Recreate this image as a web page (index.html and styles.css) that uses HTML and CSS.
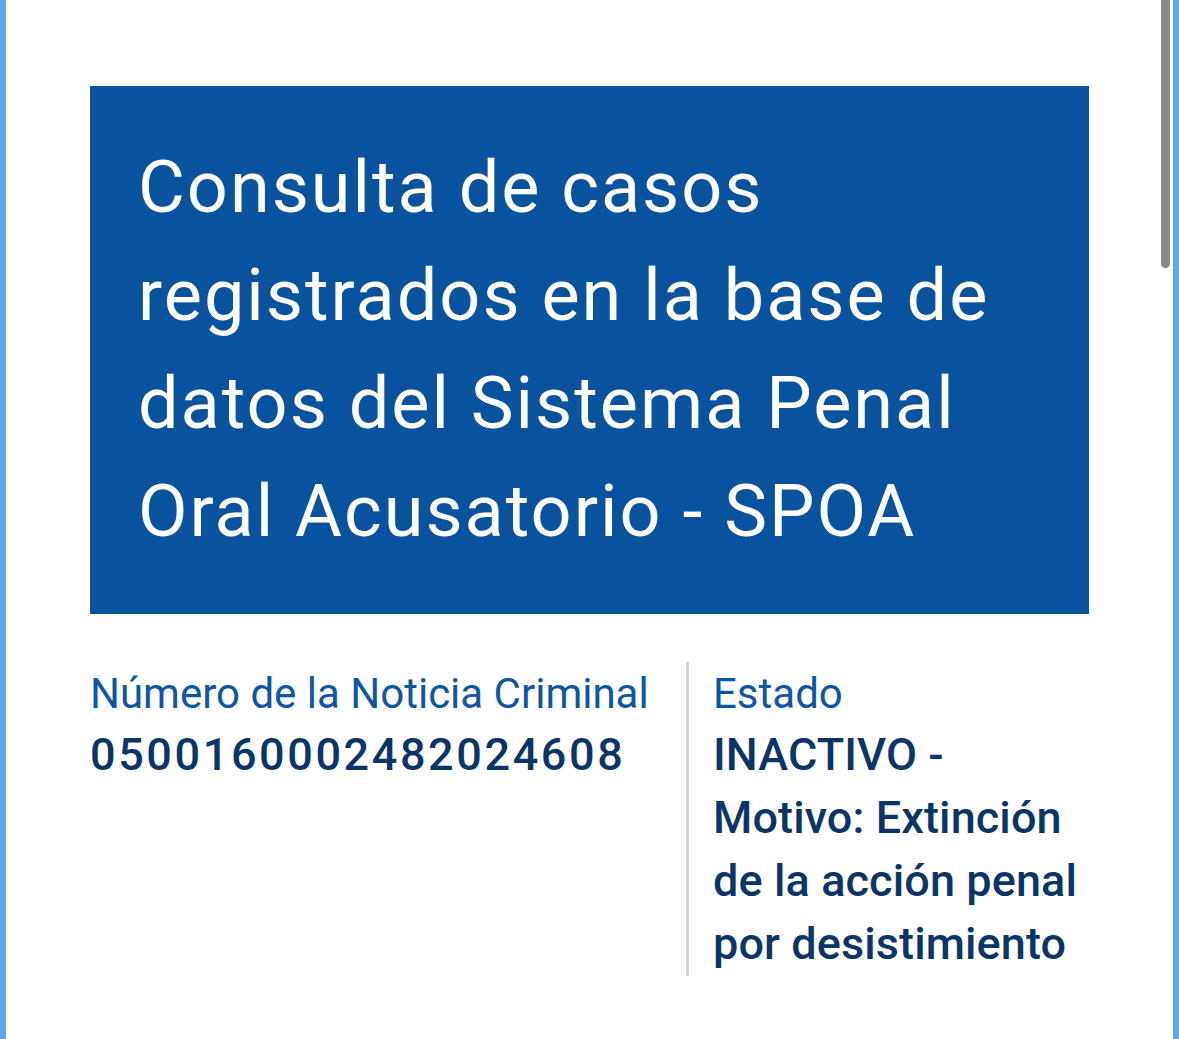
FILE: index.html
```html
<!DOCTYPE html>
<html lang="es">
<head>
<meta charset="utf-8">
<title>Consulta SPOA</title>
<link rel="stylesheet" href="styles.css">
</head>
<body>
<div class="frame">
  <div class="scrollbar"></div>
  <main class="content">
    <header class="hero">
      <h1 class="hero-title">Consulta de casos registrados en la base de datos del Sistema Penal Oral Acusatorio - SPOA</h1>
    </header>
    <section class="details">
      <div class="field field-number">
        <div class="field-label">Número de la Noticia Criminal</div>
        <div class="field-value field-value-digits">0500160002482024608</div>
      </div>
      <div class="field field-state">
        <div class="field-label">Estado</div>
        <div class="field-value">INACTIVO - Motivo: Extinción de la acción penal por desistimiento</div>
      </div>
    </section>
  </main>
</div>
</body>
</html>
```

FILE: styles.css
```css
html, body {
  margin: 0;
  padding: 0;
  background: #ffffff;
}

body {
  font-family: Roboto, "Noto Sans", "Liberation Sans", sans-serif;
}

.frame {
  position: relative;
  box-sizing: border-box;
  height: 1039px;
  overflow: hidden;
  border-left: 6px solid #62a6e8;
  border-right: 6px solid #62a6e8;
  background: #ffffff;
}

.scrollbar {
  position: absolute;
  top: 0;
  right: 3px;
  width: 9px;
  height: 268px;
  background: #888888;
  border-radius: 0 0 5px 5px;
}

.content {
  padding: 86px 84px 0 84px;
}

.hero {
  background: #08529e;
  padding: 48px 48px 48px 48px;
}

.hero-title {
  margin: 0;
  color: #ffffff;
  font-weight: 400;
  font-size: 72px;
  line-height: 108px;
  letter-spacing: 2px;
}

.details {
  display: flex;
  margin-top: 48px;
}

.field-number {
  flex: 0 0 596px;
  padding-top: 8px;
}

.field-state {
  flex: 1 1 auto;
  border-left: 3px solid #ccd5e1;
  padding: 8px 0 1px 24px;
}

.field-label {
  color: #0c56a4;
  font-size: 42px;
  line-height: 48px;
  font-weight: 400;
}

.field-value {
  margin-top: 5px;
  color: #0b3568;
  font-size: 45px;
  line-height: 63px;
  font-weight: 500;
  letter-spacing: 0.1px;
}

.field-value-digits {
  letter-spacing: 2.6px;
}
```
